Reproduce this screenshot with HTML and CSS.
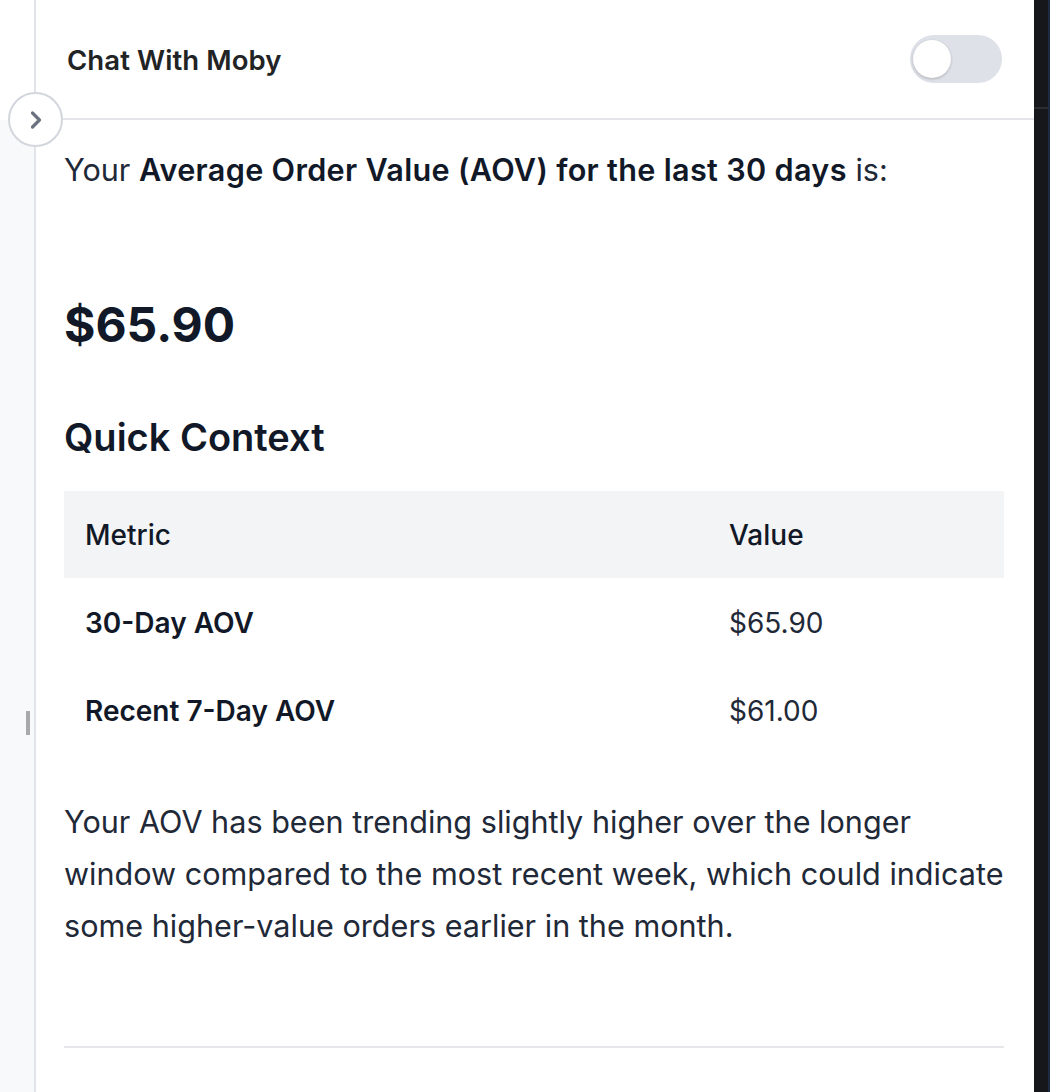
FILE: index.html
```html
<!DOCTYPE html>
<html lang="en">
<head>
<meta charset="utf-8">
<title>Chat With Moby</title>
<link rel="stylesheet" href="styles.css">
</head>
<body>
<div class="app">
  <aside class="rail"><span class="handle"></span></aside>
  <main class="panel">
    <header class="panel-header">
      <h2 class="panel-title">Chat With Moby</h2>
      <div class="toggle"><span class="knob"></span></div>
    </header>
    <div class="content">
      <p class="lead">Your <strong>Average Order Value (AOV) for the last 30 days</strong> is:</p>
      <p class="big-value">$65.90</p>
      <h3 class="section-title">Quick Context</h3>
      <table class="metrics">
        <colgroup><col class="col-metric"><col></colgroup>
        <thead>
          <tr><th>Metric</th><th>Value</th></tr>
        </thead>
        <tbody>
          <tr><td class="label">30-Day AOV</td><td>$65.90</td></tr>
          <tr><td class="label">Recent 7-Day AOV</td><td>$61.00</td></tr>
        </tbody>
      </table>
      <p class="body-text">Your AOV has been trending slightly higher over the longer window compared to the most recent week, which could indicate some higher-value orders earlier in the month.</p>
      <hr class="divider">
    </div>
  </main>
  <div class="edge"><span class="edge-line"></span></div>
  <button class="collapse" aria-label="Collapse">
    <svg width="16" height="22" viewBox="0 0 16 22"><path d="M4.5 4 L11.5 11 L4.5 18" fill="none" stroke="#6b7280" stroke-width="3.2" stroke-linecap="round" stroke-linejoin="round"/></svg>
  </button>
</div>
</body>
</html>
```
FILE: styles.css
```css
* { box-sizing: border-box; }
html, body {
  margin: 0;
  padding: 0;
  width: 1050px;
  height: 1092px;
  overflow: hidden;
  background: #fff;
  font-family: Inter, "Noto Sans", "Liberation Sans", sans-serif;
}
.app {
  position: relative;
  display: flex;
  width: 1050px;
  height: 1092px;
}
.rail {
  position: relative;
  width: 36px;
  flex: 0 0 36px;
  border-right: 2px solid #e1e4ea;
  background: linear-gradient(to bottom, #ffffff 120px, #f8f9fb 120px);
}
.handle {
  position: absolute;
  left: 26px;
  top: 711px;
  width: 4px;
  height: 24px;
  background: #a9a9a9;
}
.panel {
  flex: 1 1 auto;
  min-width: 0;
  display: flex;
  flex-direction: column;
}
.panel-header {
  height: 120px;
  flex: 0 0 120px;
  border-bottom: 2px solid #e3e5ea;
  display: flex;
  align-items: center;
  justify-content: space-between;
  padding: 2px 32px 0 31px;
}
.panel-title {
  margin: 0;
  font-size: 27.5px;
  font-weight: 600;
  color: #222325;
  letter-spacing: 0.1px;
}
.toggle {
  width: 92px;
  height: 48px;
  border-radius: 24px;
  background: #dfe1e8;
  display: flex;
  align-items: center;
  padding-left: 3px;
  margin-bottom: 2px;
}
.knob {
  width: 38px;
  height: 38px;
  border-radius: 50%;
  background: #fff;
  box-shadow: 0 1px 3px rgba(0,0,0,0.22);
}
.content {
  padding: 24px 30px 0 28px;
  color: #1f2937;
}
.lead {
  margin: 0;
  font-size: 30.6px;
  line-height: 52px;
  color: #1f2937;
}
.lead strong { font-weight: 600; color: #111827; letter-spacing: 0.32px; }
.big-value {
  margin: 101px 0 0;
  font-size: 48px;
  line-height: 56px;
  font-weight: 700;
  color: #111827;
}
.section-title {
  margin: 59px 0 0;
  font-size: 38px;
  line-height: 50px;
  font-weight: 600;
  color: #111827;
}
.metrics {
  margin-top: 29px;
  width: 940px;
  border-collapse: collapse;
  table-layout: fixed;
  font-size: 28px;
}
.col-metric { width: 644px; }
.metrics th {
  background: #f3f4f6;
  height: 87px;
  padding: 0 21px;
  text-align: left;
  font-weight: 500;
  color: #111827;
}
.metrics td {
  height: 88px;
  padding: 1px 21px 0;
  color: #1f2937;
}
.metrics td.label { font-weight: 600; color: #111827; }
.body-text {
  margin: 42px 0 0;
  font-size: 30.6px;
  line-height: 52px;
  color: #1f2937;
}
.divider {
  margin: 94px 0 0;
  border: 0;
  height: 2px;
  background: #e5e7eb;
}
.edge {
  position: relative;
  width: 16px;
  flex: 0 0 16px;
  background: #16171a;
  border-right: 2px solid #1e2a42;
}
.edge-line {
  position: absolute;
  left: 0;
  right: 0;
  top: 107px;
  height: 2px;
  background: #2b2c30;
}
.collapse {
  position: absolute;
  left: 8px;
  top: 92px;
  width: 55px;
  height: 55px;
  padding: 0;
  border-radius: 50%;
  border: 2px solid #d3d6dd;
  background: #fff;
  display: flex;
  align-items: center;
  justify-content: center;
}
```
